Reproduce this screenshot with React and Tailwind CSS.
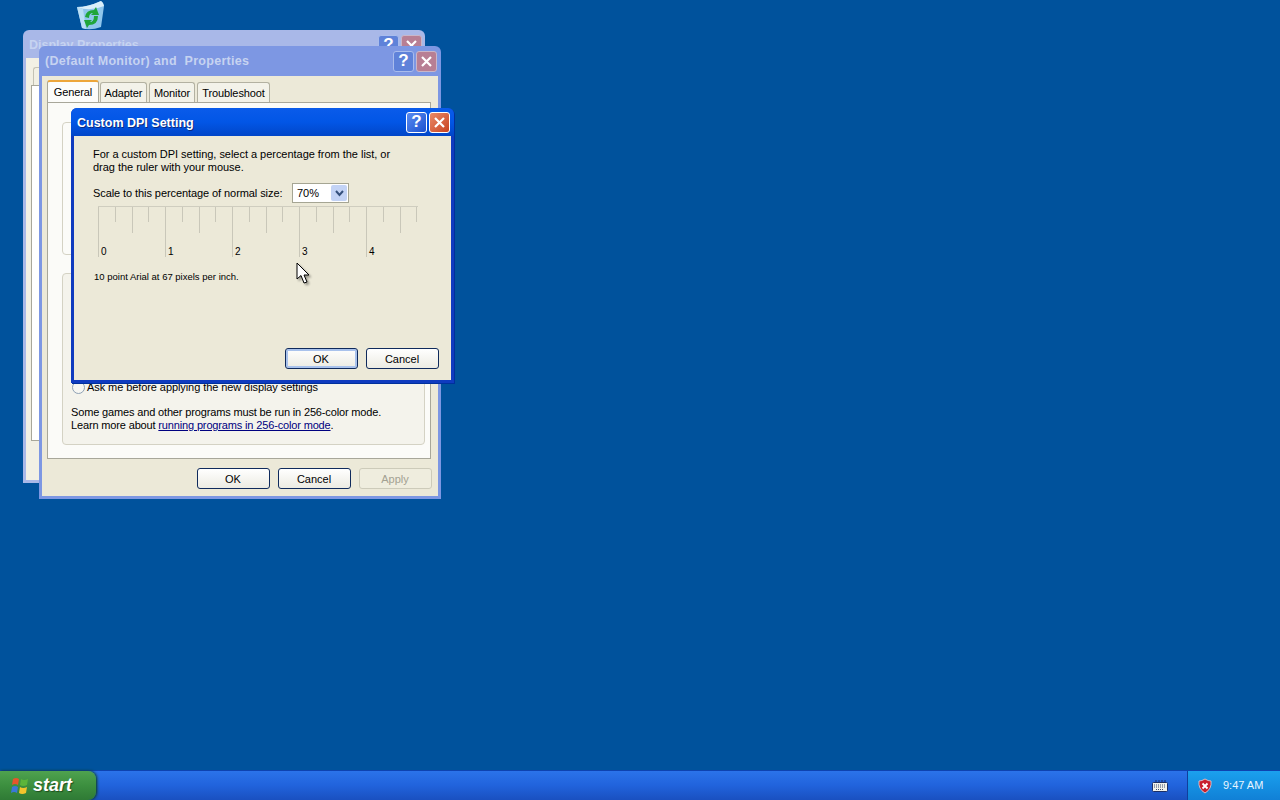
import React from 'react';

const uiFont = "font-['Liberation_Sans',Arial,sans-serif]";

const RecycleBin = () => (
  <svg width="32" height="32" viewBox="0 0 32 32">
    <path d="M3 7 Q14 7 27 1 Q30 3 30 6 L27 27 Q16 31 8 28 Z" fill="#8fc6ec" />
    <path d="M3 7 Q14 7 27 1 Q30 3 30 6 Q16 12 3 7 Z" fill="#d9eefa" />
    <path d="M3 7 L8 28 L12 29 L9 9 Z" fill="#b9def5" />
    <path d="M11 17 Q12 10 20 10 L22 7 L25 15 L17 15 L19 13 Q15 13 15 18 Z" fill="#1fa63a" />
    <path d="M24 16 Q24 25 15 25 L13 28 L10 20 L18 20 L16 22 Q20 22 20 16 Z" fill="#1fa63a" />
  </svg>
);

const WinLogo = () => (
  <svg width="20" height="20" viewBox="0 0 20 20">
    <path d="M3 3 Q6 1 9 3 L8 9 Q5 7 2 9 Z" fill="#e5552c" />
    <path d="M11 3 Q14 5 18 3 L17 9 Q13 11 10 9 Z" fill="#5cb53a" />
    <path d="M2 11 Q5 9 8 11 L7 17 Q4 15 1 17 Z" fill="#3a78d8" />
    <path d="M10 11 Q13 13 17 11 L16 17 Q12 19 9 17 Z" fill="#f2c42c" />
  </svg>
);

const Shield = () => (
  <svg width="16" height="16" viewBox="0 0 16 16">
    <path d="M8 1 Q11 3 14 3 Q15 11 8 15 Q1 11 2 3 Q5 3 8 1 Z" fill="#c8202c" stroke="#f4d0d0" strokeWidth="0.8" />
    <path d="M5.5 5.5 L10.5 10.5 M10.5 5.5 L5.5 10.5" stroke="#fff" strokeWidth="1.8" />
  </svg>
);

const Keyboard = () => (
  <svg width="16" height="14" viewBox="0 0 16 14">
    <path d="M4 3 L4 1 M7 3 L7 1 M10 3 L10 1 M13 3 L13 1" stroke="#1b2f66" />
    <rect x="0.5" y="3.5" width="15" height="9" rx="1" fill="#f1f1ea" stroke="#1b2f66" />
    <path d="M2 6 H14 M2 8 H14 M4 10.5 H12" stroke="#3b4a70" strokeDasharray="1 1" />
  </svg>
);

// title bar buttons, active and washed out versions
const HelpBtn = ({ faded }) => (
  <div className={`w-[21px] h-[21px] rounded-[3px] border flex items-center justify-center text-[17px] font-bold text-white ${uiFont} ${faded ? 'border-[#a9bcec] bg-[#5f82d9]' : 'border-white bg-gradient-to-br from-[#5a8cf0] to-[#1b50d0]'}`}>
    ?
  </div>
);

const CloseBtn = ({ faded }) => (
  <div className={`w-[21px] h-[21px] rounded-[3px] border flex items-center justify-center ${faded ? 'border-[#c9b6c8] bg-[#b87f94]' : 'border-white bg-gradient-to-br from-[#e98a68] to-[#c8401c]'}`}>
    <svg width="13" height="13" viewBox="0 0 13 13">
      <path d="M2 2 L11 11 M11 2 L2 11" stroke="#fff" strokeWidth="2.2" />
    </svg>
  </div>
);

const XpButton = ({ children, focused, disabled }) => (
  <div
    className={`w-[73px] h-[21px] rounded-[3px] border flex items-center justify-center pt-[1px] pr-[1px] text-[11px] ${
      disabled
        ? 'border-[#cdcbba] text-[#a3a192] bg-[#efedde]'
        : 'border-[#0f2a5c] text-black bg-gradient-to-b from-white to-[#ecebe2]'
    } ${focused ? 'shadow-[inset_0_0_0_2px_#a9c2ec]' : ''}`}
  >
    {children}
  </div>
);

const Tab = ({ label, active, width }) => (
  <div
    style={{ width }}
    className={`flex items-center justify-center text-[11px] text-black rounded-t-[3px] border border-b-0 tracking-[-0.1px] ${
      active
        ? 'h-[22px] -mt-[2px] bg-[#fcfcfa] border-[#a8a79a] border-t-[2px] border-t-[#eda63a] relative z-10'
        : 'h-[20px] pt-[1px] bg-[#f3f2e9] border-[#b3b1a1] mr-[2px]'
    }`}
  >
    {label}
  </div>
);

const ticks = Array.from({ length: 20 }, (_, i) => i);

const Ruler = () => (
  <div className="ml-[5px] w-[320px] border-t border-t-[#cfcdbf] flex h-[52px]">
    {ticks.map((i) => {
      const major = i % 4 === 0;
      const mid = i % 2 === 0;
      return (
        <div key={i} className="w-[16.75px] shrink-0 flex items-start">
          <div className={`w-px shrink-0 bg-[#c9c7b9] ${major ? 'h-[50px]' : mid ? 'h-[26px]' : 'h-[15px]'}`} />
          {major && <span className="ml-[2px] mt-[39px] text-[10px] leading-[12px] text-black">{i / 4}</span>}
        </div>
      );
    })}
    <div className="w-px h-[26px] bg-[#c9c7b9] -ml-[1px]" />
  </div>
);

const CustomDpiDialog = () => (
  <div className="absolute left-[71px] top-[108px] w-[383px] h-[275px] rounded-t-[6px] bg-[#0f3bbf] flex flex-col p-[3px] pt-0 shadow-[1px_1px_0_#00309c] z-30">
    <div className="h-[28px] shrink-0 -mx-[3px] rounded-t-[6px] bg-gradient-to-b from-[#0a5bea] via-[#0256e6] to-[#0146c8] flex items-center pl-[6px] pr-[4px] gap-[2px]">
      <span className="flex-1 pt-[3px] text-white font-bold text-[12.5px] [text-shadow:1px_1px_0_#0a2a80]">Custom DPI Setting</span>
      <HelpBtn />
      <CloseBtn />
    </div>
    <div className="flex-1 bg-[#ece9d8] pl-[19px] pr-[12px] pt-[12px] pb-[11px] flex flex-col text-[11px] text-black">
      <p className="leading-[13px] tracking-[-0.03px]">
        For a custom DPI setting, select a percentage from the list, or
        <br />
        drag the ruler with your mouse.
      </p>
      <div className="flex items-center mt-[9px] h-[20px]">
        <span className="w-[199px] tracking-[-0.08px]">Scale to this percentage of normal size:</span>
        <div className="w-[57px] h-[20px] border border-[#a5a593] bg-white flex items-center justify-between pl-[4px] pr-[1px]">
          <span>70%</span>
          <div className="w-[16px] h-[16px] rounded-[2px] bg-[#c3d3f5] flex items-center justify-center">
            <svg width="9" height="7" viewBox="0 0 9 7">
              <path d="M1 1 L4.5 5 L8 1" fill="none" stroke="#35507c" strokeWidth="2" />
            </svg>
          </div>
        </div>
      </div>
      <div className="mt-[3px]">
        <Ruler />
      </div>
      <p className="mt-[13px] text-[9.5px] leading-[12px] ml-px">10 point Arial at 67 pixels per inch.</p>
      <div className="mt-auto flex justify-end gap-[8px]">
        <XpButton focused>OK</XpButton>
        <XpButton>Cancel</XpButton>
      </div>
    </div>
  </div>
);

const MonitorWindow = () => (
  <div className="absolute left-[39px] top-[46px] w-[402px] h-[453px] rounded-t-[6px] bg-[#7d97e3] flex flex-col p-[3px] pt-0 z-20">
    <div className="h-[30px] shrink-0 flex items-center pl-[3px] pr-[1px] gap-[2px]">
      <span className="flex-1 text-[#c6d3f1] font-bold text-[12.5px] tracking-[0.3px]">(Default Monitor) and&nbsp; Properties</span>
      <HelpBtn faded />
      <CloseBtn faded />
    </div>
    <div className="flex-1 bg-[#ece9d8] flex flex-col pl-[5px] pr-[7px] pt-[6px] pb-[7px]">
      <div className="flex items-end h-[20px]">
        <Tab label="General" active width={52} />
        <div className="w-px" />
        <Tab label="Adapter" width={47} />
        <Tab label="Monitor" width={46} />
        <Tab label="Troubleshoot" width={73} />
      </div>
      <div className="h-[357px] bg-[#fbfbf8] border border-[#a8a79a] pl-[14px] pr-[5px] pb-[13px] flex flex-col text-[11px] text-black">
        <div className="h-[133px] mt-[19px] shrink-0 rounded-[4px] border border-[#d4d2c4]" />
        <div className="mt-[18px] flex-1 rounded-[4px] border border-[#d4d2c4] bg-[#f4f3ec] pl-[8px] flex flex-col justify-end pb-[12px] tracking-[-0.15px]">
          <div className="flex items-center gap-[2px] ml-[1px] h-[13px] mb-[12px]">
            <div className="w-[13px] h-[13px] rounded-full border border-[#8ea0b4] bg-[#f6f6f2]" />
            <span className="tracking-[-0.08px]">Ask me before applying the new display settings</span>
          </div>
          <p className="leading-[13px]">
            Some games and other programs must be run in 256-color mode.
            <br />
            Learn more about <span className="text-[#000080] underline">running programs in 256-color mode</span>.
          </p>
        </div>
      </div>
      <div className="mt-auto flex justify-end gap-[8px] -mr-px">
        <XpButton>OK</XpButton>
        <XpButton>Cancel</XpButton>
        <XpButton disabled>Apply</XpButton>
      </div>
    </div>
  </div>
);

const BackWindow = () => (
  <div className="absolute left-[23px] top-[30px] w-[402px] h-[453px] rounded-t-[6px] bg-[#a9b8e8] flex flex-col p-[3px] pt-0 z-10">
    <div className="h-[28px] shrink-0 flex items-center pl-[3px] pt-[2px] gap-[2px]">
      <span className="flex-1 text-[#c6d3f1] font-bold text-[12.5px]">Display Properties</span>
      <HelpBtn faded />
      <CloseBtn faded />
    </div>
    <div className="flex-1 bg-[#f2f0e4] flex flex-col pl-[5px] pr-[5px] pt-[9px]">
      <div className="ml-[2px] w-[30px] h-[18px] rounded-tl-[3px] border-l border-t border-[#c4c2b4] shrink-0" />
      <div className="h-[356px] shrink-0 bg-white border border-[#a8a79a]" />
    </div>
  </div>
);

const Taskbar = () => (
  <div className="h-[30px] shrink-0 flex bg-gradient-to-b from-[#2b73ea] via-[#2163dc] to-[#1a50c0] border-t border-t-[#0e43b0] relative z-40">
    <div className="w-[96px] rounded-r-[8px] bg-gradient-to-b from-[#4fa24f] via-[#3c8f3f] to-[#2f7a35] flex items-center pl-[10px] gap-[3px] shadow-[1px_0_3px_#0b3a10]">
      <WinLogo />
      <span className="text-white italic font-bold text-[18px] [text-shadow:1px_1px_1px_#1d4d1d]">start</span>
    </div>
    <div className="flex-1 flex items-center justify-end pr-[19px]">
      <Keyboard />
    </div>
    <div className="w-[93px] bg-gradient-to-b from-[#1ba0ee] via-[#1590e2] to-[#1180d6] border-l border-l-[#0f3f9c] flex items-center pl-[9px] gap-[10px]">
      <Shield />
      <span className="text-[11px] text-[#e8f4ff]">9:47 AM</span>
    </div>
  </div>
);

export default function App() {
  return (
    <div className={`w-[1280px] h-[800px] overflow-hidden bg-[#00529c] flex flex-col relative ${uiFont}`}>
      <div className="flex-1 relative">
        <div className="absolute left-[74px] top-0">
          <RecycleBin />
        </div>
        <BackWindow />
        <MonitorWindow />
        <CustomDpiDialog />
        {/* mouse pointer */}
        <svg className="absolute left-[296px] top-[262px] z-50 drop-shadow-[2px_2px_1px_rgba(0,0,0,0.35)]" width="16" height="24" viewBox="0 0 16 24">
          <path d="M1 1 L1 17 L5 13.5 L8 21 L11 20 L8 13 L13 13 Z" fill="#fff" stroke="#000" />
        </svg>
      </div>
      <Taskbar />
    </div>
  );
}
